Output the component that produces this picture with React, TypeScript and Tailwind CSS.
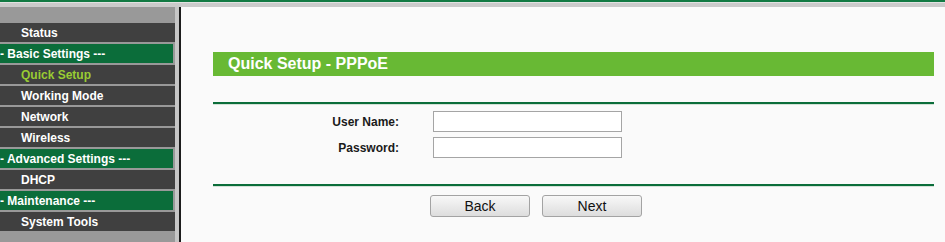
const menu = [
  { label: "Status", kind: "item" },
  { label: "- Basic Settings ---", kind: "group" },
  { label: "Quick Setup", kind: "active" },
  { label: "Working Mode", kind: "item" },
  { label: "Network", kind: "item" },
  { label: "Wireless", kind: "item" },
  { label: "- Advanced Settings ---", kind: "group" },
  { label: "DHCP", kind: "item" },
  { label: "- Maintenance ---", kind: "group" },
  { label: "System Tools", kind: "item" },
];

function Sidebar() {
  return (
    <div className="w-[175px] shrink-0 bg-[#999999] pt-[16px] flex flex-col gap-[2px]">
      {menu.map((m) =>
        m.kind === "group" ? (
          <div
            key={m.label}
            className="h-[19px] w-[173px] bg-[#0b6d3a] text-white text-[12px] font-bold leading-[20px] whitespace-nowrap"
          >
            {m.label}
          </div>
        ) : (
          <div
            key={m.label}
            className={
              "h-[19px] bg-[#404040] text-[12px] font-bold leading-[20px] pl-[21px] whitespace-nowrap " +
              (m.kind === "active" ? "text-[#99cc33]" : "text-white")
            }
          >
            {m.label}
          </div>
        ),
      )}
    </div>
  );
}

function Divider() {
  return (
    <div className="w-[721px]">
      <div className="h-[2px] bg-[#0b6d3a]" />
      <div className="h-[1px] bg-[#d3e2d7]" />
    </div>
  );
}

function Field({ label }: { label: string }) {
  return (
    <div className="flex items-center">
      <div className="w-[186px] text-right text-[12px] font-bold text-[#1a1a1a]">
        {label}
      </div>
      <input
        type="text"
        className="ml-[34px] w-[189px] h-[21px] bg-white border border-[#a5a5a5] outline-none"
      />
    </div>
  );
}

function Btn({ children }: { children: string }) {
  return (
    <button className="w-[100px] h-[22px] rounded-[3px] border border-[#a3a3a3] bg-gradient-to-b from-[#f8f8f8] to-[#dddddd] text-[14px] text-[#111] leading-[20px]">
      {children}
    </button>
  );
}

export default function App() {
  return (
    <div
      className="w-[945px] h-[242px] overflow-hidden flex flex-col bg-[#fafafa]"
      style={{ fontFamily: '"Liberation Sans", Arial, sans-serif' }}
    >
      <div className="h-[7px] shrink-0 border-t-2 border-[#127a43] bg-[#cbcbcb]">
        <div className="h-[1px] bg-[#e2e2e2]" />
      </div>
      <div className="flex flex-1">
        <Sidebar />
        <div className="w-[4px] bg-[#c6c6c6]" />
        <div className="w-[2px] bg-[#1c1c1c]" />
        <div className="flex-1 bg-[#fafafa] pl-[32px]">
          <div className="mt-[45px] w-[721px] h-[24px] bg-[#68b934] text-white text-[16px] font-bold leading-[24px] pl-[15px]">
            Quick Setup - PPPoE
          </div>
          <div className="mt-[26px]">
            <Divider />
          </div>
          <div className="mt-[6px] flex flex-col gap-[5px]">
            <Field label="User Name:" />
            <Field label="Password:" />
          </div>
          <div className="mt-[26px]">
            <Divider />
          </div>
          <div className="mt-[8px] pl-[217px] flex gap-[12px]">
            <Btn>Back</Btn>
            <Btn>Next</Btn>
          </div>
        </div>
      </div>
    </div>
  );
}
